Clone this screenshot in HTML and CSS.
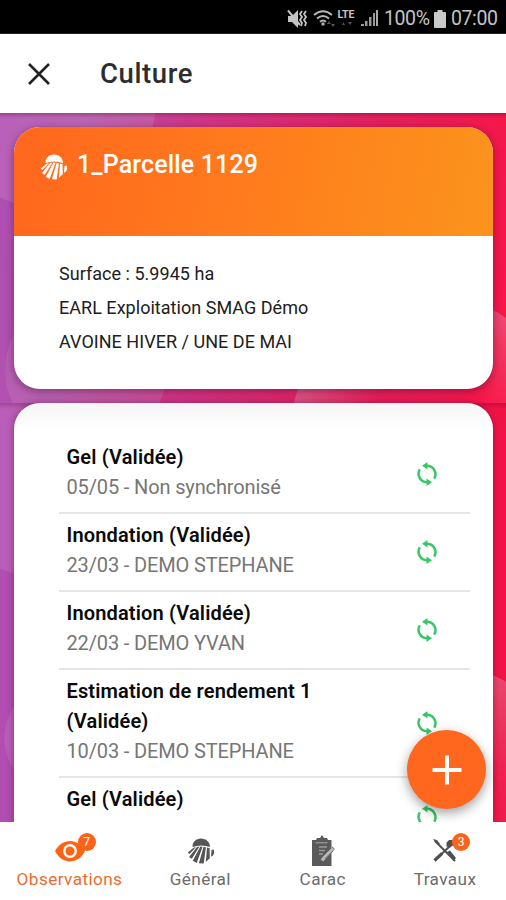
FILE: index.html
```
<!DOCTYPE html>
<html lang="fr">
<head>
<meta charset="utf-8">
<title>Culture</title>
<link rel="stylesheet" href="styles.css">
</head>
<body>
<svg class="defs" width="0" height="0" aria-hidden="true">
  <symbol id="sync" viewBox="0 0 20 24">
    <path d="M10 3.800A8.400 8.400 0 0 1 17.200 16.600M10 20.200A8.400 8.400 0 0 1 2.800 7.400" fill="none" stroke="currentColor" stroke-width="2.500"/>
    <path d="M5 3.700 10.500 0v7.400zM15 20.300 9.500 24v-7.400z" fill="currentColor"/>
  </symbol>
  <symbol id="field" viewBox="0 0 28 26">
    <path d="M5.500 9C5.500 4 9 .5 14 .5S23 4 23 9q-9-3-17.500 0z" fill="currentColor"/>
    <path d="M6.500 9.700 9 9 2.500 16 .8 14.500zM10 8.900l2.500-.3L4.800 20.800 2 18.900zM13.400 8.600l2.200.1L9.700 25 5.800 22.800zM16.600 8.800l2.300.4L16.700 25.500l-4.800-.2zM20 9.400l2.600.9.200 9.900-4 3.700zM24.500 12l2.300-.5q1 3-.8 6l-2 1.200z" fill="currentColor"/>
  </symbol>
</svg>
<div class="screen">
  <div class="status">
    <svg class="st-icons" viewBox="0 0 94 24" width="94" height="24">
      <path d="M1 9h4l6-6v18l-6-6H1z" fill="#c4c4c4"/>
      <path d="M1 3.500 13 18" stroke="#c4c4c4" stroke-width="2"/>
      <path d="M15 4l-2 3 2 3-2 3 2 3-1 3M19 4l-2 3 2 3-2 3 2 3-1 3" fill="none" stroke="#c4c4c4" stroke-width="1.800"/>
      <g fill="none" stroke="#b5b5b5" stroke-width="2">
        <path d="M27 8q9-7.500 18 0M30 11.500q6-5 12 0M33 14.800q3-2.500 6 0"/>
        <path d="M36 15.500v3" stroke-width="3"/>
      </g>
      <path d="M40 17l2-3 2 3zM44 17h4l-2 3zM55 18l1.500-3 1.500 3zM61 15h4l-2 3z" fill="#555"/>
      <path d="M74 19h3v-2h-3zM78 19h2.500v-5h-2.500zM82 19h2.500v-9h-2.500zM86 19h2v-13h-2z" fill="#999"/>
      <path d="M89 19h2V3h-2z" fill="#aaa"/>
      <text x="50.500" y="11" class="lte">LTE</text>
    </svg>
    <span class="pct">100%</span>
    <svg class="battery" viewBox="0 0 12 18" width="12" height="18"><path d="M3.500 0h5v2H11a1 1 0 0 1 1 1v14a1 1 0 0 1-1 1H1a1 1 0 0 1-1-1V3a1 1 0 0 1 1-1h2.500z" fill="#cacaca"/></svg>
    <span class="clock">07:00</span>
  </div>
  <header class="appbar">
    <svg width="22" height="22" viewBox="0 0 22 22"><path d="M1 1 21 21M21 1 1 21" stroke="#222" stroke-width="2.600"/></svg>
    <h1>Culture</h1>
  </header>
  <section class="band band-top">
    <div class="card">
      <div class="card-head">
        <svg class="field-icon" width="28" height="26"><use href="#field"/></svg>
        <h2>1_Parcelle 1129</h2>
      </div>
      <div class="card-body">
        <p>Surface : 5.9945 ha</p>
        <p>EARL Exploitation SMAG Démo</p>
        <p>AVOINE HIVER / UNE DE MAI</p>
      </div>
    </div>
  </section>
  <section class="band band-list">
    <div class="list">
      <div class="row"><div class="txt"><b>Gel (Validée)</b><span>05/05 - Non synchronisé</span></div><svg class="sync" width="20" height="24"><use href="#sync"/></svg></div>
      <div class="row"><div class="txt"><b>Inondation (Validée)</b><span>23/03 - DEMO STEPHANE</span></div><svg class="sync" width="20" height="24"><use href="#sync"/></svg></div>
      <div class="row"><div class="txt"><b>Inondation (Validée)</b><span>22/03 - DEMO YVAN</span></div><svg class="sync" width="20" height="24"><use href="#sync"/></svg></div>
      <div class="row tall"><div class="txt"><b>Estimation de rendement 1<br>(Validée)</b><span>10/03 - DEMO STEPHANE</span></div><svg class="sync" width="20" height="24"><use href="#sync"/></svg></div>
      <div class="row last"><div class="txt"><b>Gel (Validée)</b></div><svg class="sync" width="20" height="24"><use href="#sync"/></svg></div>
    </div>
    <div class="fab"><svg width="30" height="30" viewBox="0 0 30 30"><path d="M15 .5v29M.5 15h29" stroke="#fff" stroke-width="4"/></svg></div>
  </section>
  <nav class="tabs">
    <div class="tab active">
      <div class="ico"><svg width="30" height="22" viewBox="0 0 30 22"><path d="M0 11C7-2.500 23-2.500 30 11 23 25 7 25 0 11z" fill="#ff6415"/><circle cx="15" cy="11" r="5.700" fill="#ff6415" stroke="#fff" stroke-width="2.400"/></svg><i class="badge">7</i></div>
      <span>Observations</span>
    </div>
    <div class="tab general">
      <div class="ico"><svg width="28" height="26"><use href="#field"/></svg></div>
      <span>Général</span>
    </div>
    <div class="tab carac">
      <div class="ico"><svg width="24" height="32" viewBox="0 0 24 32"><path d="M1 5h4l1-2h3l2-3 2 3h3l1 2h3.500v26H1z" fill="#5a5a5a"/><path d="M4.500 7.700h12" stroke="#8f8f8f" stroke-width="1.500"/><path d="M8 12h8M8 15.500h6M8 19h4" stroke="#999" stroke-width="1.300"/><path d="M22.500 13.500 14 22l-3 3.500" stroke="#b9b9b9" stroke-width="3.400" fill="none"/><path d="M22.500 15.500 14 23.500M21 12l2.500 2" stroke="#666" stroke-width="1"/></svg></div>
      <span>Carac</span>
    </div>
    <div class="tab travaux">
      <div class="ico"><svg width="26" height="25" viewBox="0 0 26 25"><path d="M2 3 22 23" stroke="#505050" stroke-width="2"/><path d="M0 1l4 1 3 4-1 1-4-3zM14 14l3-1.500 6 7.500-2.500 3z" fill="#505050"/><path d="M1.500 22.500 9 15.500" stroke="#505050" stroke-width="3.200"/><path d="M8 16.500 17 8" stroke="#505050" stroke-width="2"/><path d="M13.500 8.500V4.500L16 2h8v7l-4-1.500-3 2z" fill="#505050"/></svg><i class="badge">3</i></div>
      <span>Travaux</span>
    </div>
  </nav>
</div>
</body>
</html>
```

FILE: styles.css
```
* { box-sizing: border-box; margin: 0; padding: 0; }
body { font-family: Roboto, "Liberation Sans", sans-serif; background: #fff; }
.defs { position: absolute; }
.screen { width: 506px; height: 900px; display: flex; flex-direction: column; overflow: hidden; }
.status { height: 34px; background: #000; display: flex; align-items: center; justify-content: flex-end; padding: 4px 8px 0 0; color: #c4c4c4; font-size: 19px; border-bottom: 1px solid #222; }
.st-icons { margin-right: 3px; }
.lte { font: 700 10.500px Roboto, sans-serif; fill: #c4c4c4; }
.pct { width: 45px; white-space: nowrap; font-size: 19.500px; letter-spacing: -.4px; }
.battery { margin: 0 5px 0 5px; }
.clock { width: 47px; white-space: nowrap; font-size: 19.500px; letter-spacing: -.4px; }
.appbar { height: 79px; display: flex; align-items: center; padding: 0 28px; gap: 50px; }
.appbar h1 { font-size: 27.500px; font-weight: 500; color: #2d2d2f; letter-spacing: .6px; line-height: 36px; }
.band { position: relative; padding: 0 13px 0 14px; }
.band-top {
  height: 290px; padding-top: 14px;
  background:
    linear-gradient(180deg, rgba(80,0,50,.3), transparent 5px),
    radial-gradient(circle at 86px 257px, rgba(200,130,190,.28) 80px, transparent 81px),
    radial-gradient(circle at 428px 317px, transparent 60px, rgba(220,170,190,.34) 136px, transparent 137px),
    radial-gradient(circle at 46px -16px, rgba(205,140,195,.3) 109px, rgba(205,140,195,.3) 110px, transparent 111px),
    linear-gradient(97deg, #b04eb5 0, #b255aa 16%, #cf3687 37%, #e2215e 68%, #fa1445 100%);
}
.card { height: 262px; border-radius: 26px; overflow: hidden; background: #fff; box-shadow: 0 2px 9px rgba(70,10,50,.5); }
.card-head { height: 109px; display: flex; align-items: flex-start; padding: 22px 26px; gap: 9px; color: #fff; background: linear-gradient(100deg, #ff671e, #ff7b1d 48%, #fb941c); }
.card-head .field-icon { margin-top: 5px; }
.card-head h2 { font-size: 25px; font-weight: 500; line-height: 32px; white-space: nowrap; letter-spacing: .15px; }
.card-body { padding: 21px 45px; color: #202020; font-size: 18px; line-height: 34px; white-space: nowrap; letter-spacing: .03px; }
.band-list {
  height: 419px;
  background:
    linear-gradient(180deg, rgba(80,0,50,.25), transparent 6px),
    radial-gradient(circle at 63px 335px, rgba(200,140,190,.25) 58px, transparent 59px),
    radial-gradient(circle at 428px 419px, transparent 60px, rgba(220,160,180,.36) 160px, transparent 161px),
    radial-gradient(circle at 46px 50px, rgba(215,150,205,.22) 124px, transparent 125px),
    linear-gradient(90deg, #b04eb5 0, #b14da8 5%, #e2215e 65%, #f21244 100%);
}
.list { height: 419px; border-radius: 26px 26px 0 0; background: linear-gradient(180deg, #f5f5f5, #fff 28px); padding: 33px 23px 0 45px; overflow: hidden; box-shadow: 0 0 7px rgba(80,0,50,.45); }
.row { height: 78px; display: flex; justify-content: space-between; align-items: center; padding: 0 33px 0 7.500px; border-bottom: 2px solid #e5e5e5; }
.tall { height: 108px; }
.last { border: 0; }
.txt { align-self: flex-start; padding-top: 6px; line-height: 30px; font-size: 20px; white-space: nowrap; }
.txt b, .txt span { display: block; }
.txt b { font-weight: 600; color: #0a0a0a; letter-spacing: .15px; }
.txt span { color: #767676; letter-spacing: -.14px; }
.sync { color: #38c768; }
.tall .sync { margin-top: -1px; }
.fab { position: absolute; right: 20px; top: 327px; width: 79px; height: 79px; border-radius: 50%; background: #ff671e; display: grid; place-items: center; box-shadow: 0 4px 12px rgba(0,0,0,.38); }
.tabs { position: relative; height: 78px; display: grid; grid-template-columns: 139px 122.500px 122.500px 122px; background: #fff; color: #6c6c6c; }
.tab { display: flex; flex-direction: column; align-items: center; font-size: 17.200px; letter-spacing: .4px; line-height: 24px; }
.tab.active { color: #e86d31; }
.ico { position: relative; height: 45px; display: flex; align-items: center; padding-top: 12px; color: #555; }
.general .ico, .travaux .ico { left: 1px; }
.badge { position: absolute; top: 11px; right: -11px; width: 18px; height: 18px; border-radius: 50%; background: #f9631b; color: #fff; font-size: 12px; font-style: normal; line-height: 18px; text-align: center; letter-spacing: 0; }
```
